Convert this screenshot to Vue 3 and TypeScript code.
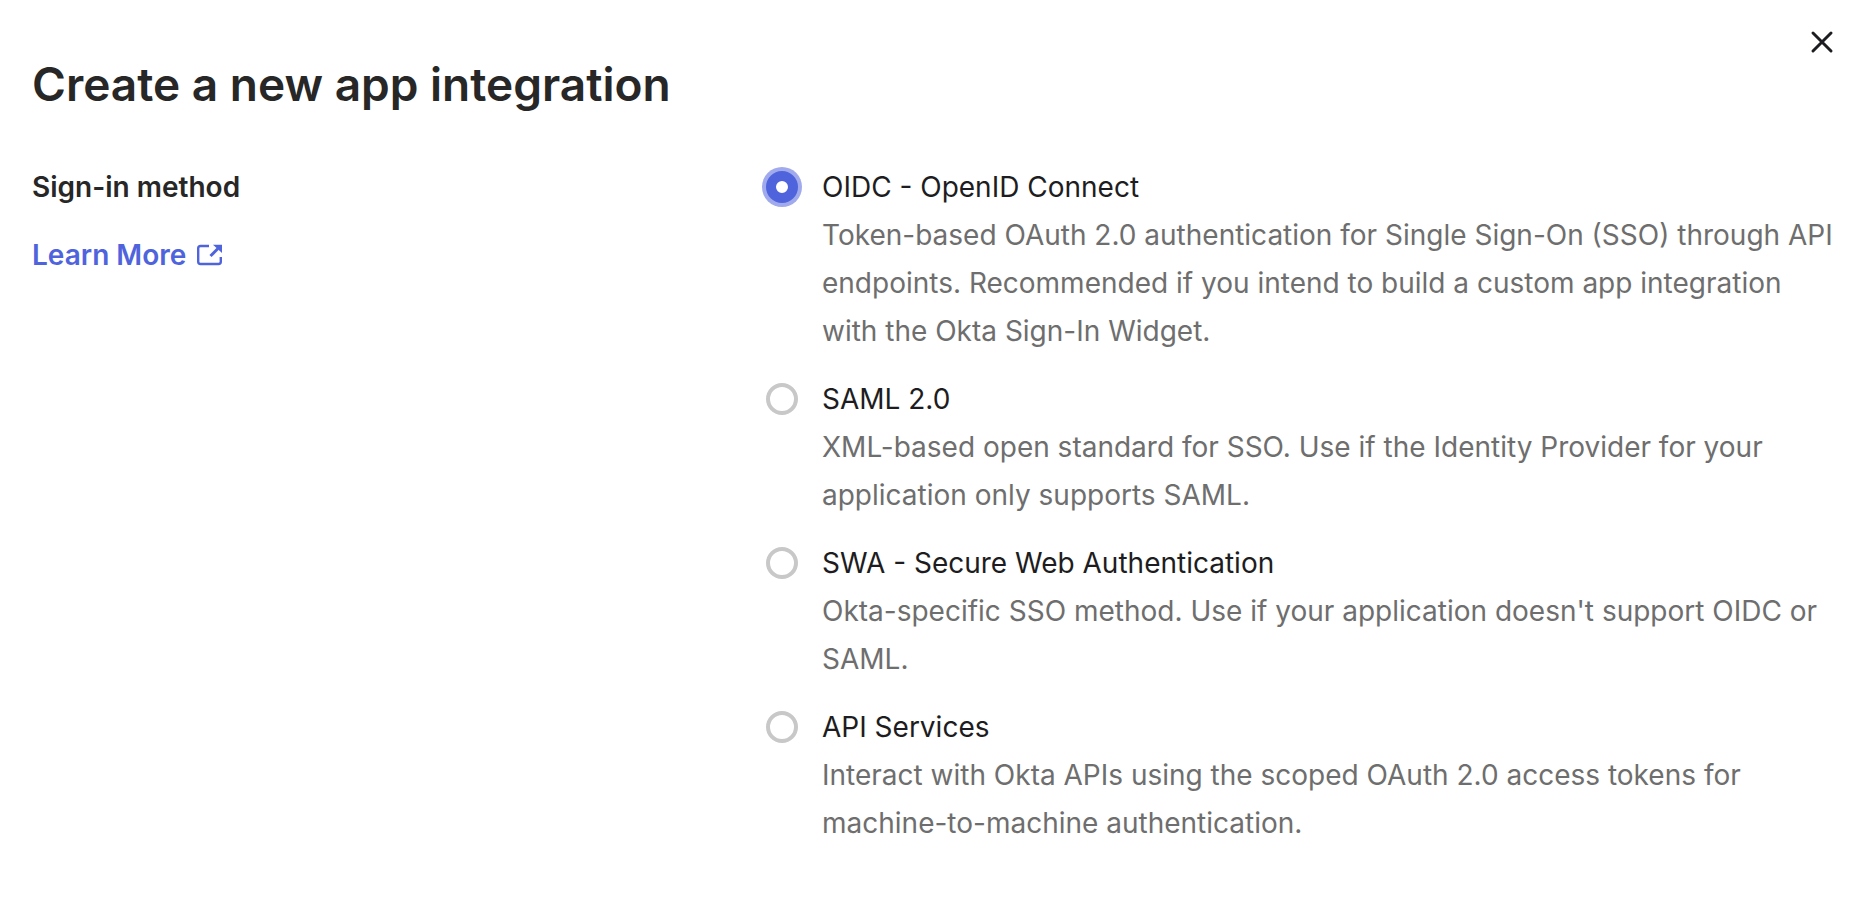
<script setup lang="ts">
import { ref } from 'vue'

interface Method {
  id: string
  title: string
  description: string
}

const methods: Method[] = [
  { id: 'oidc', title: 'OIDC - OpenID Connect', description: 'Token-based OAuth 2.0 authentication for Single Sign-On (SSO) through API endpoints. Recommended if you intend to build a custom app integration with the Okta Sign-In Widget.' },
  { id: 'saml', title: 'SAML 2.0', description: 'XML-based open standard for SSO. Use if the Identity Provider for your application only supports SAML.' },
  { id: 'swa', title: 'SWA - Secure Web Authentication', description: "Okta-specific SSO method. Use if your application doesn't support OIDC or SAML." },
  { id: 'api', title: 'API Services', description: 'Interact with Okta APIs using the scoped OAuth 2.0 access tokens for machine-to-machine authentication.' },
]

const selected = ref('oidc')
</script>

<template>
  <main class="dialog" role="dialog" aria-labelledby="dialog-title">
    <button class="close" type="button" aria-label="Close">
      <svg viewBox="0 0 24 24" width="24" height="24" aria-hidden="true">
        <path d="M3 3L21 21M21 3L3 21" />
      </svg>
    </button>
    <h1 id="dialog-title" class="title">Create a new app integration</h1>
    <div class="row">
      <div class="side">
        <h2 id="method-label" class="label">Sign-in method</h2>
        <a class="learn" href="#">
          <span>Learn More</span>
          <svg viewBox="0 0 25 22" width="25" height="22" aria-hidden="true">
            <path d="M12 2H3.500Q1.200 2 1.200 4.200V17.800Q1.200 20 3.500 20H21.500Q23.800 20 23.800 17.800V13" />
            <path class="shaft" d="M13.500 12L21 4.500" />
            <path class="head" d="M16 0.800H25V9Z" />
          </svg>
        </a>
      </div>
      <div class="options" role="radiogroup" aria-labelledby="method-label">
        <div v-for="m in methods" :key="m.id" class="option">
          <input :id="m.id" v-model="selected" class="radio" type="radio" name="method" :value="m.id" :aria-describedby="m.id + '-desc'" />
          <div class="text">
            <label class="name" :for="m.id">{{ m.title }}</label>
            <p :id="m.id + '-desc'" class="desc">{{ m.description }}</p>
          </div>
        </div>
      </div>
    </div>
  </main>
</template>

<style>
body {
  margin: 0;
  background: #fff;
}
</style>

<style scoped>
.dialog {
  position: relative;
  box-sizing: border-box;
  padding: 55px 32px 60px;
  font-family: Inter, sans-serif;
  font-size: 28px;
  line-height: 48px;
  color: #1d1d21;
}
.close {
  position: absolute;
  top: 30px;
  right: 32px;
  display: flex;
  padding: 0;
  border: 0;
  background: none;
  cursor: pointer;
}
.close svg {
  fill: none;
  stroke: #1d1d21;
  stroke-width: 3;
  stroke-linecap: round;
}
.title {
  margin: 0 0 50px;
  color: #272727;
  font-size: 46px;
  line-height: 58px;
  font-weight: 600;
}
.row {
  display: grid;
  grid-template-columns: 730px minmax(0, 1fr);
}
.label {
  margin: 0 0 20px;
  color: #272727;
  font-size: 28px;
  line-height: 48px;
  font-weight: 600;
}
.learn {
  display: inline-flex;
  align-items: center;
  gap: 11px;
  color: #4f64dc;
  font-weight: 600;
  text-decoration: none;
}
.learn svg {
  fill: none;
  stroke: currentColor;
  stroke-width: 2.4;
}
.learn .shaft {
  stroke-width: 3;
}
.learn .head {
  fill: currentColor;
  stroke: none;
}
.options {
  display: flex;
  flex-direction: column;
  gap: 20px;
}
.option {
  display: flex;
  gap: 20px;
}
.radio {
  appearance: none;
  box-sizing: border-box;
  flex: none;
  width: 32px;
  height: 32px;
  margin: 8px 4px;
  border: 4px solid #c8c8c8;
  border-radius: 50%;
  background: #fff;
}
.radio:checked {
  border: 10px solid #4f64dc;
  box-shadow: 0 0 0 4px #a0aaec;
}
.name {
  display: block;
}
.desc {
  margin: 0;
  color: #6e6e6e;
}
</style>
